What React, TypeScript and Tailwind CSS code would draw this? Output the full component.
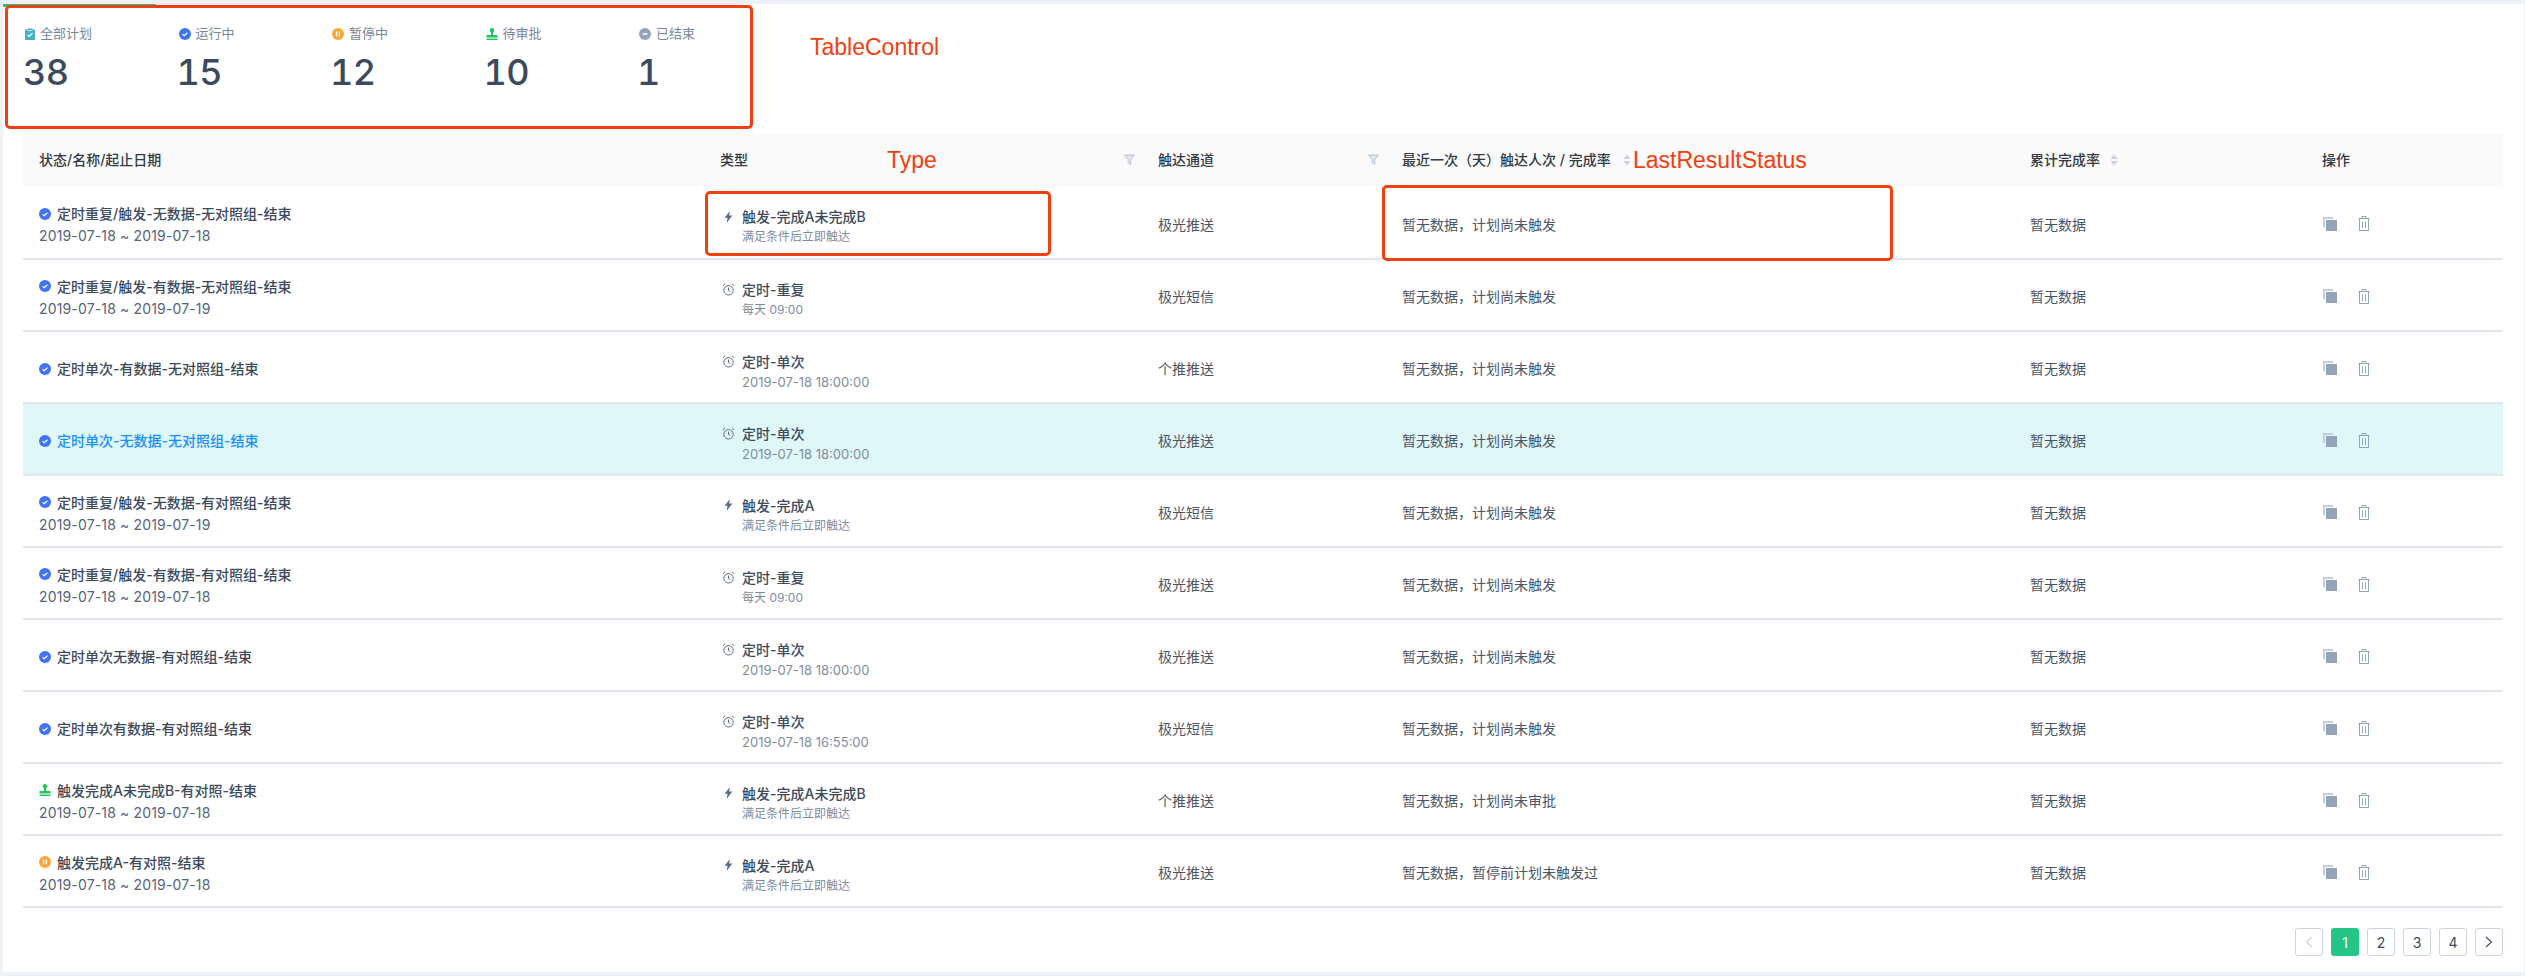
import React from "react";

type Status = "running" | "approval" | "paused";
type Kind = "trigger" | "timer";

interface Plan {
  status: Status;
  name: string;
  dates?: string;
  kind: Kind;
  type: string;
  sub: string;
  channel: string;
  last: string;
  active?: boolean;
}

const TRIGGER_SUB = "满足条件后立即触达";
const NO_TRIGGER = "暂无数据，计划尚未触发";

const plans: Plan[] = [
  { status: "running", name: "定时重复/触发-无数据-无对照组-结束", dates: "2019-07-18 ~ 2019-07-18", kind: "trigger", type: "触发-完成A未完成B", sub: TRIGGER_SUB, channel: "极光推送", last: NO_TRIGGER },
  { status: "running", name: "定时重复/触发-有数据-无对照组-结束", dates: "2019-07-18 ~ 2019-07-19", kind: "timer", type: "定时-重复", sub: "每天 09:00", channel: "极光短信", last: NO_TRIGGER },
  { status: "running", name: "定时单次-有数据-无对照组-结束", kind: "timer", type: "定时-单次", sub: "2019-07-18 18:00:00", channel: "个推推送", last: NO_TRIGGER },
  { status: "running", name: "定时单次-无数据-无对照组-结束", kind: "timer", type: "定时-单次", sub: "2019-07-18 18:00:00", channel: "极光推送", last: NO_TRIGGER, active: true },
  { status: "running", name: "定时重复/触发-无数据-有对照组-结束", dates: "2019-07-18 ~ 2019-07-19", kind: "trigger", type: "触发-完成A", sub: TRIGGER_SUB, channel: "极光短信", last: NO_TRIGGER },
  { status: "running", name: "定时重复/触发-有数据-有对照组-结束", dates: "2019-07-18 ~ 2019-07-18", kind: "timer", type: "定时-重复", sub: "每天 09:00", channel: "极光推送", last: NO_TRIGGER },
  { status: "running", name: "定时单次无数据-有对照组-结束", kind: "timer", type: "定时-单次", sub: "2019-07-18 18:00:00", channel: "极光推送", last: NO_TRIGGER },
  { status: "running", name: "定时单次有数据-有对照组-结束", kind: "timer", type: "定时-单次", sub: "2019-07-18 16:55:00", channel: "极光短信", last: NO_TRIGGER },
  { status: "approval", name: "触发完成A未完成B-有对照-结束", dates: "2019-07-18 ~ 2019-07-18", kind: "trigger", type: "触发-完成A未完成B", sub: TRIGGER_SUB, channel: "个推推送", last: "暂无数据，计划尚未审批" },
  { status: "paused", name: "触发完成A-有对照-结束", dates: "2019-07-18 ~ 2019-07-18", kind: "trigger", type: "触发-完成A", sub: TRIGGER_SUB, channel: "极光推送", last: "暂无数据，暂停前计划未触发过" },
];

const RunningIcon = () => (
  <svg width="12" height="12" viewBox="0 0 12 12" className="shrink-0">
    <circle cx="6" cy="6" r="6" fill="#3f74f6" />
    <path d="M3.6 6.2 5.2 7.6 8.4 4.8" fill="none" stroke="#fff" strokeWidth="1.2" />
  </svg>
);

const PausedIcon = () => (
  <svg width="12" height="12" viewBox="0 0 12 12" className="shrink-0">
    <circle cx="6" cy="6" r="6" fill="#fca63a" />
    <path d="M4.6 3.6V8.4M7.4 3.6V8.4" stroke="#fff" strokeWidth="1.3" />
  </svg>
);

const ApprovalIcon = () => (
  <svg width="12" height="12" viewBox="0 0 12 12" className="shrink-0">
    <circle cx="6" cy="2.2" r="2.2" fill="#22c55e" />
    <path d="M5 4h2v3h4.500v2.500H.5V7H5zM.5 10.400h11V12H.5z" fill="#22c55e" />
  </svg>
);

const EndedIcon = () => (
  <svg width="12" height="12" viewBox="0 0 12 12" className="shrink-0">
    <circle cx="6" cy="6" r="6" fill="#94a3b8" />
    <path d="M3.500 6h5" stroke="#fff" strokeWidth="1.500" />
  </svg>
);

const ClipboardIcon = () => (
  <svg width="10" height="12" viewBox="0 0 10 12" className="shrink-0">
    <path d="M0 1.500h2.500V.5h5v1H10V12H0z" fill="#45aecb" />
    <path d="M2.500 6.800 4.300 8.500 7.500 5.200" fill="none" stroke="#fff" strokeWidth="1.200" />
    <path d="M2.500 2h5v1h-5z" fill="#d8f0f6" />
  </svg>
);

const statusIcon: Record<Status, React.ReactNode> = {
  running: <RunningIcon />,
  paused: <PausedIcon />,
  approval: <ApprovalIcon />,
};

const BoltIcon = () => (
  <svg width="9" height="12" viewBox="0 0 9 12" className="ml-[2px] shrink-0">
    <path d="M6 0 .6 6.800h3L2.600 12 8.400 4.600H5z" fill="#5b6b80" />
  </svg>
);

const AlarmIcon = () => (
  <svg width="13" height="13" viewBox="0 0 13 13" className="shrink-0" fill="none" stroke="#5b6b80" strokeWidth="1">
    <circle cx="6.500" cy="7.300" r="4.700" />
    <path d="M6.500 4.600v2.900l1.700 1M.8 3 3 .9M12.200 3 10 .9" />
  </svg>
);

const FilterIcon = () => (
  <svg width="11" height="11" viewBox="0 0 11 11" className="-mr-[9px] shrink-0">
    <path d="M.5 1h10L6.800 5.600V10.500L4.200 9V5.600z" fill="#e1e7ef" stroke="#a9b8cc" strokeWidth=".8" />
  </svg>
);

const SortIcon = () => (
  <svg width="8" height="12" viewBox="0 0 8 12" className="shrink-0">
    <path d="M4 0.500 7.500 5H.5zM4 11.500.5 7h7z" fill="#c8d2df" />
  </svg>
);

const CopyIcon = () => (
  <svg width="14" height="14" viewBox="0 0 14 14">
    <path d="M0 0h10v2H2v8H0z" fill="#c3cddb" />
    <path d="M3 3h11v11H3z" fill="#94a3b8" />
  </svg>
);

const TrashIcon = () => (
  <svg width="12" height="15" viewBox="0 0 12 15" fill="none" stroke="#94a3b8" strokeWidth="1">
    <path d="M.5 2.500h11M4 2.500V.5h4v2M1.500 2.500v12h9v-12M4.500 5.500v6.500M7.500 5.500v6.500" />
  </svg>
);

const stats = [
  { icon: <ClipboardIcon />, label: "全部计划", value: 38 },
  { icon: <RunningIcon />, label: "运行中", value: 15 },
  { icon: <PausedIcon />, label: "暂停中", value: 12 },
  { icon: <ApprovalIcon />, label: "待审批", value: 10 },
  { icon: <EndedIcon />, label: "已结束", value: 1 },
];

const Note = ({ className }: { className: string }) => (
  <div className={`absolute rounded-[5px] border-[3px] border-[#f1400f] ${className}`} />
);

const NoteText = ({ className, children }: { className: string; children: React.ReactNode }) => (
  <span className={`absolute font-['Liberation_Sans',sans-serif] text-[23px] leading-none text-[#f1400f] ${className}`}>{children}</span>
);

export default function App() {
  return (
    <div className="h-[976px] bg-[#eef1f5] pt-1 pb-1 pl-[3px] pr-px font-['Inter','Noto_Sans_CJK_SC',sans-serif]">
      <div className="relative flex h-full flex-col bg-white">
        <div className="absolute left-0 top-0 h-[3px] w-[153px] bg-[#22c38a]" />

        <div className="flex h-[130px] pl-[22px] pt-[23px]">
          {stats.map((s) => (
            <div key={s.label} className="w-[153.500px]">
              <div className="flex h-[14px] items-center gap-[5px] text-[13px] text-[#78869a]">
                {s.icon}
                <span>{s.label}</span>
              </div>
              <div className="-ml-[2px] mt-[9px] text-[36px] font-medium leading-[44px] tracking-[-0.5px] text-[#3d4a5c] tabular-nums">{s.value}</div>
            </div>
          ))}
        </div>

        <table className="ml-5 w-[2480px] table-fixed border-collapse text-left text-[14px] text-[#4a5568]">
          <colgroup>
            <col className="w-[681px]" />
            <col className="w-[438px]" />
            <col className="w-[244px]" />
            <col className="w-[628px]" />
            <col className="w-[292px]" />
            <col className="w-[197px]" />
          </colgroup>
          <thead>
            <tr className="h-[53px] bg-[#fafafa] text-[#333a45]">
              <th className="px-4 pb-[2px] font-medium">状态/名称/起止日期</th>
              <th className="px-4 pb-[2px] font-medium">
                <div className="flex items-center justify-between">
                  <span>类型</span>
                  <FilterIcon />
                </div>
              </th>
              <th className="px-4 pb-[2px] font-medium">
                <div className="flex items-center justify-between">
                  <span>触达通道</span>
                  <FilterIcon />
                </div>
              </th>
              <th className="px-4 pb-[2px] font-medium">
                <div className="flex items-center gap-3">
                  <span>最近一次（天）触达人次 / 完成率</span>
                  <SortIcon />
                </div>
              </th>
              <th className="px-4 pb-[2px] font-medium">
                <div className="flex items-center gap-[10px]">
                  <span>累计完成率</span>
                  <SortIcon />
                </div>
              </th>
              <th className="px-4 pb-[2px] font-medium">操作</th>
            </tr>
          </thead>
          <tbody>
            {plans.map((p) => (
              <tr key={p.name} className={`h-[72px] border-b-2 border-[#e3e6ec] ${p.active ? "bg-[#e0f7f8]" : ""}`}>
                <td className={`px-4 ${p.dates ? "pt-1" : "pt-[3px]"}`}>
                  <div className="flex items-center gap-[6px]">
                    {statusIcon[p.status]}
                    <span className={`font-medium ${p.active ? "text-[#1890ff]" : "text-[#3d4a5c]"}`}>{p.name}</span>
                  </div>
                  {p.dates && <div className="mt-px tracking-[0.15px] text-[#56647a]">{p.dates}</div>}
                </td>
                <td className="px-4 pt-[6px]">
                  <div className="flex items-center">
                    <div className="flex w-[22px] shrink-0 pl-[2px]">{p.kind === "trigger" ? <BoltIcon /> : <AlarmIcon />}</div>
                    <span className="font-medium text-[#3d4a5c]">{p.type}</span>
                  </div>
                  <div className={`mt-[2px] pl-[22px] text-[#7f8ca0] ${p.sub.startsWith("2019") ? "text-[13px] leading-4" : "text-[12px] leading-4"}`}>{p.sub}</div>
                </td>
                <td className="px-4 pt-[3px]">{p.channel}</td>
                <td className="px-4 pt-[3px]">{p.last}</td>
                <td className="px-4 pt-[3px]">暂无数据</td>
                <td className="px-4 pt-[2px]">
                  <div className="ml-px flex items-center gap-[21px]">
                    <CopyIcon />
                    <TrashIcon />
                  </div>
                </td>
              </tr>
            ))}
          </tbody>
        </table>

        <div className="mr-[21px] mt-5 flex justify-end gap-2 text-[14px] text-[#3d4a5c]">
          <div className="flex h-7 w-7 items-center justify-center rounded-[3px] border border-[#cbd5e1] text-[#cbd5e1]">
            <svg width="8" height="12" viewBox="0 0 8 12" fill="none" stroke="currentColor" strokeWidth="1.100">
              <path d="M7 1 1.500 6 7 11" />
            </svg>
          </div>
          <div className="flex h-7 w-7 items-center justify-center rounded-[3px] bg-[#26c486] text-white">1</div>
          {[2, 3, 4].map((n) => (
            <div key={n} className="flex h-7 w-7 items-center justify-center rounded-[3px] border border-[#cbd5e1]">
              {n}
            </div>
          ))}
          <div className="flex h-7 w-7 items-center justify-center rounded-[3px] border border-[#cbd5e1] text-[#3d4a5c]">
            <svg width="8" height="12" viewBox="0 0 8 12" fill="none" stroke="currentColor" strokeWidth="1.100">
              <path d="M1 1 6.500 6 1 11" />
            </svg>
          </div>
        </div>

        <Note className="left-[2px] top-px h-[124px] w-[748px]" />
        <Note className="left-[702px] top-[187px] h-[65px] w-[346px]" />
        <Note className="left-[1379px] top-[181px] h-[76px] w-[511px]" />
        <NoteText className="left-[807px] top-[32px]">TableControl</NoteText>
        <NoteText className="left-[884px] top-[145px]">Type</NoteText>
        <NoteText className="left-[1630px] top-[145px]">LastResultStatus</NoteText>
      </div>
    </div>
  );
}
